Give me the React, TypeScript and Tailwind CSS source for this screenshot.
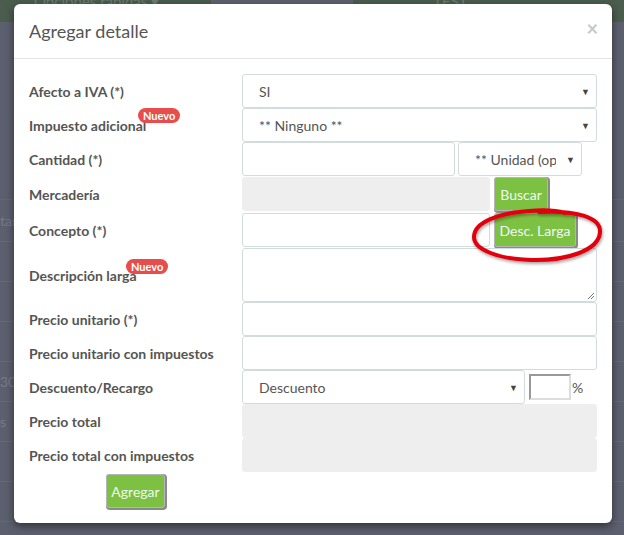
import React from "react";

const font = { fontFamily: "Lato, 'Open Sans', sans-serif" };

function Arrow() {
  return <span className="shrink-0 text-[9px] text-[#444] leading-none">▼</span>;
}

function SelectBox({ value, className = "" }: { value: string; className?: string }) {
  return (
    <div
      className={`h-[34px] bg-white border border-[#d2dcdc] rounded-[3px] flex items-center justify-between gap-[10px] pl-4 pr-[6px] text-[14px] text-[#555] ${className}`}
    >
      <span className="overflow-hidden whitespace-nowrap">{value}</span>
      <Arrow />
    </div>
  );
}

function Field({ gray = false, className = "" }: { gray?: boolean; className?: string }) {
  return (
    <div
      className={`h-[34px] rounded-[3px] border ${
        gray ? "bg-[#eeeeee] border-[#eeeeee]" : "bg-white border-[#d2dcdc]"
      } ${className}`}
    />
  );
}

function Badge({ className }: { className: string }) {
  return (
    <span
      className={`absolute bg-[#e84d4d] text-white text-[11px] font-bold leading-none px-[5px] py-[2px] rounded-full ${className}`}
    >
      Nuevo
    </span>
  );
}

function Row({
  label,
  children,
  badge,
  h = "h-[34px]",
  mt = "mt-0",
}: {
  label: string;
  children: React.ReactNode;
  badge?: string;
  h?: string;
  mt?: string;
}) {
  return (
    <div className={`flex ${h} ${mt}`}>
      <div className="w-[213px] shrink-0 flex items-center">
        <span className="relative text-[14px] font-bold text-[#555]">
          {label}
          {badge && <Badge className={badge} />}
        </span>
      </div>
      <div className="flex-1 min-w-0">{children}</div>
    </div>
  );
}

function GreenButton({ label, className = "" }: { label: string; className?: string }) {
  return (
    <button
      className={`h-[34px] bg-[#7dc142] text-[#eef8f8] text-[14px] rounded-[3px] border border-[#b5b5b5] shadow-[1px_1px_0_1px_#8a8a8a] ${className}`}
    >
      {label}
    </button>
  );
}

export default function App() {
  return (
    <div className="relative w-[624px] h-[535px] overflow-hidden bg-[#5c5f6e]" style={font}>
      {/* page behind the overlay */}
      <div className="h-[22px] bg-[#4b5d4f] flex items-start text-[#6c7d70] text-[15px] leading-none">
        <span className="ml-[34px] -mt-[6px]">Opciones rápidas ▾</span>
        <div className="ml-[52px] -mt-[6px] w-[142px] h-[12px] bg-[#5f6270]" />
        <span className="ml-[80px] -mt-[6px]">TEST</span>
      </div>
      <div className="flex flex-col text-[#767a8a] text-[14px]">
        <div className="h-[178px] border-b border-[#66695a]" />
        <div className="h-[42px] border-b border-[#656878] flex items-center">tar</div>
        <div className="h-[40px] border-b border-[#656878]" />
        <div className="h-[40px] border-b border-[#656878]" />
        <div className="h-[40px] border-b border-[#656878]" />
        <div className="h-[40px] border-b border-[#656878] flex items-center">30,</div>
        <div className="h-[40px] border-b border-[#656878] flex items-center">s</div>
        <div className="h-[40px] border-b border-[#656878]" />
        <div className="h-[40px] border-b border-[#656878]" />
      </div>

      {/* modal */}
      <div className="absolute left-[14px] top-[4px] w-[598px] h-[519px] bg-white rounded-[6px] shadow-[0_3px_9px_rgba(0,0,0,0.5)]">
        <div className="h-[55px] border-b border-[#e5e5e5] flex items-center justify-between px-[15px]">
          <h4 className="text-[18px] text-[#555]">Agregar detalle</h4>
          <span className="text-[20px] font-bold text-[#c8c8c8] -mt-[7px] -mr-[1px]">×</span>
        </div>

        <div className="pt-[15px] px-[15px]">
          <Row label="Afecto a IVA (*)">
            <SelectBox value="SI" />
          </Row>
          <Row label="Impuesto adicional" badge="left-[109px] -top-[7px]">
            <SelectBox value="** Ninguno **" />
          </Row>
          <Row label="Cantidad (*)">
            <div className="flex gap-[3px]">
              <Field className="w-[213px]" />
              <SelectBox value="** Unidad (opcional)" className="w-[124px] pl-[16px]" />
            </div>
          </Row>
          <Row label="Mercadería" mt="mt-[1px]">
            <div className="flex gap-[4px]">
              <Field gray className="w-[248px]" />
              <GreenButton label="Buscar" className="w-[54px]" />
            </div>
          </Row>
          <Row label="Concepto (*)" mt="mt-[2px]">
            <div className="flex gap-[4px]">
              <Field className="w-[248px]" />
              <GreenButton label="Desc. Larga" className="w-[82px]" />
            </div>
          </Row>
          <Row label="Descripción larga" badge="left-[97px] -top-[6px]" h="h-[54px]" mt="mt-[1px]">
            <div className="relative h-[54px] bg-white border border-[#d2dcdc] rounded-[3px]">
              <svg className="absolute right-[1px] bottom-[1px]" width="9" height="9" viewBox="0 0 9 9">
                <path d="M8 2L2 8M8 5L5 8" stroke="#777" strokeWidth="1" />
              </svg>
            </div>
          </Row>
          <Row label="Precio unitario (*)">
            <Field />
          </Row>
          <Row label="Precio unitario con impuestos">
            <Field />
          </Row>
          <Row label="Descuento/Recargo">
            <div className="flex items-center">
              <SelectBox value="Descuento" className="w-[283px]" />
              <div className="ml-[4px] w-[42px] h-[26px] border-2 border-[#999] border-r-[#ddd] border-b-[#ddd] bg-white" />
              <span className="ml-[1px] text-[14px] text-[#555]">%</span>
            </div>
          </Row>
          <Row label="Precio total">
            <Field gray />
          </Row>
          <Row label="Precio total con impuestos">
            <Field gray />
          </Row>
          <div className="w-[213px] flex justify-center mt-[2px]">
            <GreenButton label="Agregar" className="w-[59px]" />
          </div>
        </div>

        {/* hand-drawn highlight */}
        <svg className="absolute left-[455px] top-[198px]" width="142" height="68" viewBox="0 0 142 68">
          <defs>
            <filter id="sh" x="-20%" y="-20%" width="140%" height="140%">
              <feDropShadow dx="1" dy="2" stdDeviation="1.5" floodColor="#000" floodOpacity="0.35" />
            </filter>
          </defs>
          <path
            d="M70 10 C 106 8, 132 15, 131 30 C 130 49, 96 59, 62 58 C 30 57, 5 48, 5 35 C 5 20, 30 11, 60 9 C 72 8, 86 8, 96 11"
            fill="none"
            stroke="#e3000e"
            strokeWidth="4"
            strokeLinecap="round"
            filter="url(#sh)"
          />
        </svg>
      </div>
    </div>
  );
}
